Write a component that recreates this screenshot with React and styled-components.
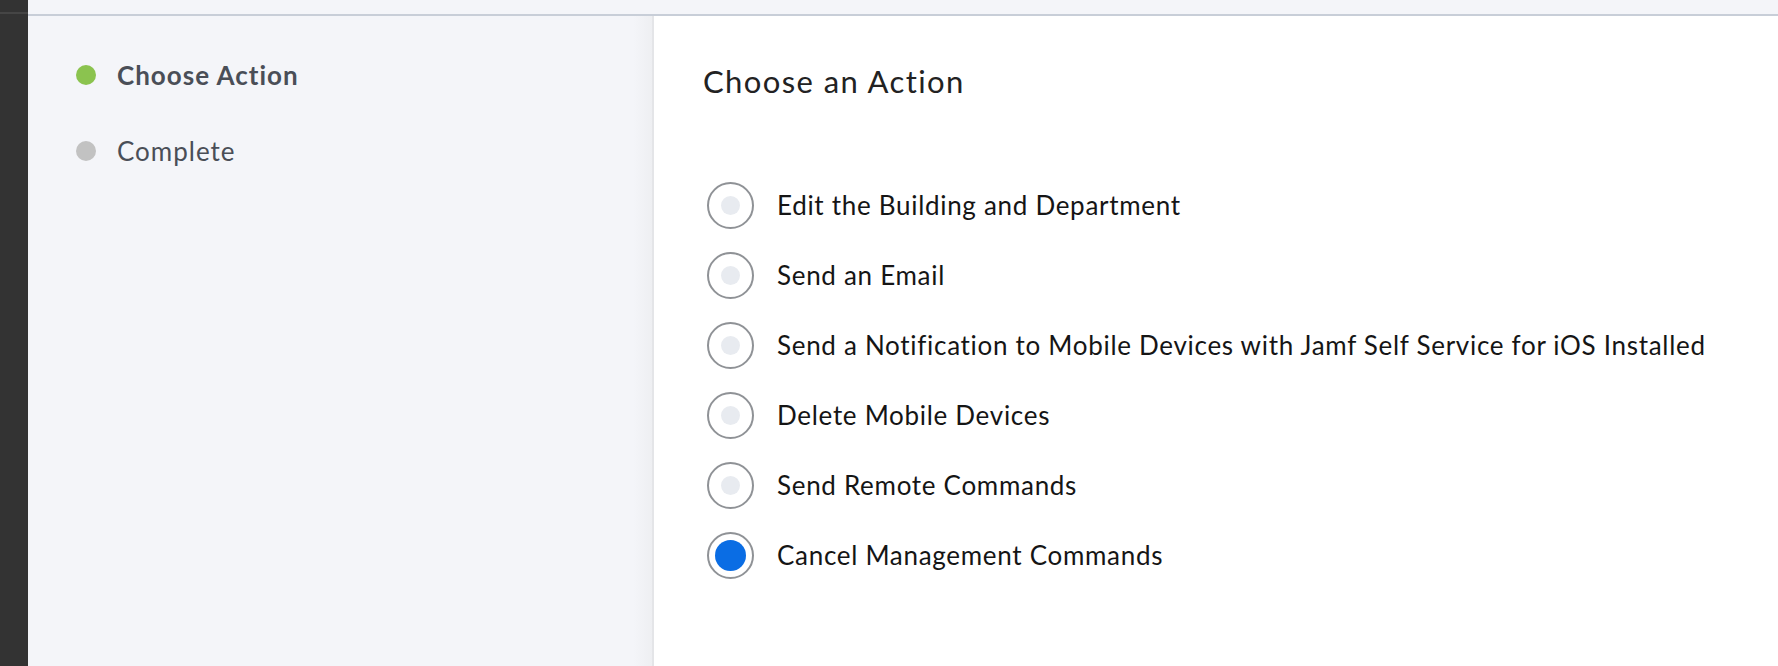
import styled, { createGlobalStyle } from 'styled-components';

const GlobalStyle = createGlobalStyle`
  html, body {
    margin: 0;
    padding: 0;
    height: 100%;
  }
  * { box-sizing: border-box; }
  #root { height: 100%; }
`;

const Page = styled.div`
  display: flex;
  height: 100vh;
  font-family: Lato, 'Open Sans', sans-serif;
  overflow: hidden;
`;

const DarkRail = styled.div`
  width: 28px;
  flex-shrink: 0;
  background: #333333;
  padding-top: 12px;
  &::before {
    content: '';
    display: block;
    height: 2px;
    background: #454545;
  }
`;

const Shell = styled.div`
  flex: 1;
  display: flex;
  flex-direction: column;
`;

const TopBar = styled.div`
  height: 16px;
  flex-shrink: 0;
  background: #f4f5f9;
  border-bottom: 2px solid #c8ced8;
`;

const Body = styled.div`
  flex: 1;
  display: flex;
`;

const Sidebar = styled.nav`
  width: 626px;
  flex-shrink: 0;
  background: linear-gradient(90deg, #f4f5f9 0%, #f4f5f9 97%, #eeeff2 100%);
  border-right: 2px solid #e4e5e8;
  padding: 44px 0 0 48px;
  display: flex;
  flex-direction: column;
  gap: 46px;
`;

const Step = styled.div`
  display: flex;
  align-items: center;
  height: 30px;
  gap: 21px;
  color: #4a4e57;
  font-size: 26px;
  letter-spacing: 1px;
  font-weight: ${p => (p.$active ? 700 : 400)};
`;

const StepDot = styled.span`
  width: 20px;
  height: 20px;
  border-radius: 50%;
  background: ${p => (p.$active ? '#8bc34f' : '#c2c2c2')};
`;

const Main = styled.main`
  flex: 1;
  background: #ffffff;
  padding: 47px 0 0 49px;
`;

const Heading = styled.h2`
  margin: 0;
  font-size: 31px;
  line-height: 36px;
  letter-spacing: 1.4px;
  font-weight: 400;
  color: #222222;
`;

const Options = styled.div`
  margin-top: 83px;
  display: flex;
  flex-direction: column;
  gap: 24px;
`;

const Option = styled.label`
  display: flex;
  align-items: center;
  gap: 23px;
  height: 46px;
  padding-left: 4px;
  font-size: 26px;
  letter-spacing: 0.7px;
  color: #151515;
  cursor: pointer;
`;

const RadioRing = styled.span`
  width: 47px;
  height: 47px;
  flex-shrink: 0;
  border-radius: 50%;
  border: 2px solid #8f9296;
  background: #fff;
  display: flex;
  align-items: center;
  justify-content: center;
  &::after {
    content: '';
    width: ${p => (p.$checked ? '31px' : '19px')};
    height: ${p => (p.$checked ? '31px' : '19px')};
    border-radius: 50%;
    background: ${p => (p.$checked ? '#0a6de4' : '#e8ebf0')};
  }
`;

const actions = [
  'Edit the Building and Department',
  'Send an Email',
  'Send a Notification to Mobile Devices with Jamf Self Service for iOS Installed',
  'Delete Mobile Devices',
  'Send Remote Commands',
  'Cancel Management Commands',
];

export default function App() {
  const selected = 5;
  return (
    <>
      <GlobalStyle />
      <Page>
        <DarkRail />
        <Shell>
          <TopBar />
          <Body>
            <Sidebar>
              <Step $active>
                <StepDot $active />
                Choose Action
              </Step>
              <Step>
                <StepDot />
                Complete
              </Step>
            </Sidebar>
            <Main>
              <Heading>Choose an Action</Heading>
              <Options>
                {actions.map((a, i) => (
                  <Option key={a}>
                    <RadioRing $checked={i === selected} />
                    {a}
                  </Option>
                ))}
              </Options>
            </Main>
          </Body>
        </Shell>
      </Page>
    </>
  );
}
